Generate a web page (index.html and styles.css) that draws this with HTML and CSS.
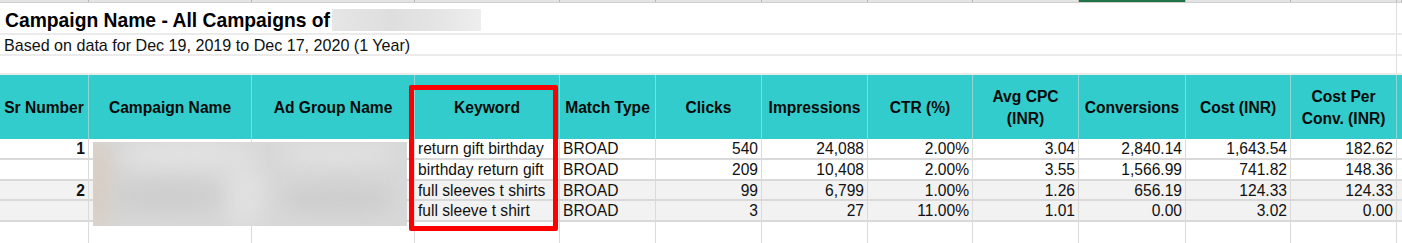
FILE: index.html
```html
<!DOCTYPE html>
<html>
<head>
<meta charset="utf-8">
<link rel="stylesheet" href="styles.css">
</head>
<body>
<div class="sheet">
  <div class="colbar">
    <span></span><span></span><span></span><span></span><span></span><span></span><span></span><span></span><span></span><span class="sel"></span><span></span><span></span><span></span>
  </div>
  <div class="row title-row">
    <div class="c merged title">Campaign Name - All Campaigns of</div>
    <div class="c plain"></div>
    <div class="c plain last"></div>
  </div>
  <div class="row sub-row">
    <div class="c merged sub">Based on data for Dec 19, 2019 to Dec 17, 2020 (1 Year)</div>
    <div class="c plain"></div>
    <div class="c plain last"></div>
  </div>
  <div class="row empty-row">
    <div class="c merged"></div>
    <div class="c plain"></div>
    <div class="c plain last"></div>
  </div>
  <div class="row head">
    <div class="h">Sr Number</div>
    <div class="h">Campaign Name</div>
    <div class="h">Ad Group Name</div>
    <div class="h">Keyword</div>
    <div class="h">Match Type</div>
    <div class="h">Clicks</div>
    <div class="h">Impressions</div>
    <div class="h">CTR (%)</div>
    <div class="h">Avg CPC<br>(INR)</div>
    <div class="h">Conversions</div>
    <div class="h">Cost (INR)</div>
    <div class="h">Cost Per<br>Conv. (INR)</div>
    <div class="h last"></div>
  </div>
  <div class="row data r1">
    <div class="d num b">1</div><div class="d"></div><div class="d"></div>
    <div class="d txt">return gift birthday</div><div class="d txt">BROAD</div>
    <div class="d num">540</div><div class="d num">24,088</div><div class="d num">2.00%</div>
    <div class="d num">3.04</div><div class="d num">2,840.14</div><div class="d num">1,643.54</div><div class="d num">182.62</div><div class="d last"></div>
  </div>
  <div class="row data r2">
    <div class="d num b"></div><div class="d"></div><div class="d"></div>
    <div class="d txt">birthday return gift</div><div class="d txt">BROAD</div>
    <div class="d num">209</div><div class="d num">10,408</div><div class="d num">2.00%</div>
    <div class="d num">3.55</div><div class="d num">1,566.99</div><div class="d num">741.82</div><div class="d num">148.36</div><div class="d last"></div>
  </div>
  <div class="row data r3 alt">
    <div class="d num b">2</div><div class="d"></div><div class="d"></div>
    <div class="d txt">full sleeves t shirts</div><div class="d txt">BROAD</div>
    <div class="d num">99</div><div class="d num">6,799</div><div class="d num">1.00%</div>
    <div class="d num">1.26</div><div class="d num">656.19</div><div class="d num">124.33</div><div class="d num">124.33</div><div class="d last"></div>
  </div>
  <div class="row data r4 alt">
    <div class="d num b"></div><div class="d"></div><div class="d"></div>
    <div class="d txt">full sleeve t shirt</div><div class="d txt">BROAD</div>
    <div class="d num">3</div><div class="d num">27</div><div class="d num">11.00%</div>
    <div class="d num">1.01</div><div class="d num">0.00</div><div class="d num">3.02</div><div class="d num">0.00</div><div class="d last"></div>
  </div>
  <div class="row data r5">
    <div class="d"></div><div class="d"></div><div class="d"></div><div class="d"></div><div class="d"></div><div class="d"></div><div class="d"></div><div class="d"></div><div class="d"></div><div class="d"></div><div class="d"></div><div class="d"></div><div class="d last"></div>
  </div>

  <div class="blur-title"></div>
  <div class="blur-names"><i class="s1"></i><i class="s2"></i><i class="s3"></i><i class="s4"></i><i class="s5"></i><i class="s6"></i></div>
  <div class="highlight"></div>
</div>
</body>
</html>
```

FILE: styles.css
```css
html, body {
  margin: 0;
  padding: 0;
  background: #ffffff;
}
body {
  font-family: "Liberation Sans", Arial, sans-serif;
  color: #111111;
}
.sheet {
  position: relative;
  width: 1402px;
  height: 243px;
  overflow: hidden;
}
.colbar, .row {
  display: grid;
  grid-template-columns: 89px 163px 163px 145px 96px 106px 106px 105px 106px 107px 105px 106px 1fr;
}
.colbar {
  height: 3px;
  background: #e4e4e4;
  border-bottom: 1px solid #cfcfcf;
  box-sizing: border-box;
}
.colbar span {
  border-right: 1px solid #b8b8b8;
}
.colbar span.sel {
  background: #217346;
}
.row .merged {
  grid-column: 1 / 12;
}
.c {
  box-sizing: border-box;
  border-bottom: 2px solid #ebebeb;
}
.c.plain {
  border-right: 1px solid #e0e0e0;
}
.c.plain.last { border-right: none; }
.title-row { height: 32px; }
.sub-row { height: 20px; }
.empty-row { height: 20px; }
.title {
  font-weight: bold;
  font-size: 19.3px;
  padding: 7px 0 0 5px;
  line-height: 22px;
  color: #000;
}
.sub {
  font-size: 16.1px;
  line-height: 18px;
  padding: 1px 0 0 4px;
  color: #111;
}
.head {
  height: 64px;
  background: #33cccc;
}
.h {
  box-sizing: border-box;
  display: flex;
  align-items: center;
  justify-content: center;
  text-align: center;
  font-weight: bold;
  font-size: 15.6px;
  line-height: 22px;
  border-right: 1px solid #8fd6d6;
  color: #0a0a0a;
  padding-top: 1px;
}
.h.last { border-right: none; }
.data { height: 21px; }
.data.r3 { height: 20px; }
.data.alt { background: #f2f2f2; }
.d {
  box-sizing: border-box;
  border-right: 1px solid #dadada;
  border-bottom: 2px solid #d9d9d9;
  font-size: 15.6px;
  line-height: 19px;
  white-space: nowrap;
  overflow: hidden;
  color: #111;
}
.r5 .d { border-bottom: none; }
.d.last { border-right: none; }
.d.num {
  text-align: right;
  padding-right: 3px;
}
.d.b { font-weight: bold; }
.d.txt {
  padding-left: 3px;
}
.blur-title {
  position: absolute;
  left: 332px;
  top: 9px;
  width: 149px;
  height: 22px;
  background: linear-gradient(90deg, #e6e6e6 0%, #dedede 40%, #e6e6e6 75%, #eeeeee 100%);
}
.blur-names {
  position: absolute;
  left: 93px;
  top: 142px;
  width: 314px;
  height: 84px;
  background: #d8d8d8;
  overflow: hidden;
}
.blur-names i {
  position: absolute;
  display: block;
  border-radius: 40%;
  filter: blur(10px);
}
.blur-names .s1 { left: -10px; top: -5px; width: 30px; height: 94px; background: #d8cec4; }
.blur-names .s2 { left: 30px; top: 0; width: 130px; height: 26px; background: #e2e2e2; }
.blur-names .s3 { left: 130px; top: 20px; width: 40px; height: 64px; background: #e0e0e0; }
.blur-names .s4 { left: 190px; top: 0; width: 110px; height: 24px; background: #e0e0e0; }
.blur-names .s5 { left: 20px; top: 40px; width: 110px; height: 30px; background: #cdcdcd; }
.blur-names .s6 { left: 190px; top: 42px; width: 110px; height: 30px; background: #cdcdcd; }
.highlight {
  position: absolute;
  left: 409px;
  top: 85px;
  width: 149px;
  height: 146px;
  box-sizing: border-box;
  border: 5px solid #ff0000;
  border-radius: 2px;
}
```
